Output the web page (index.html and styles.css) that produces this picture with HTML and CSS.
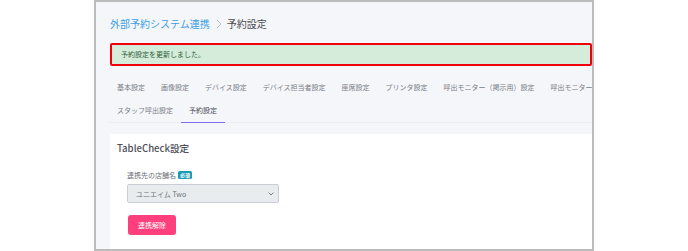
FILE: index.html
```html
<!DOCTYPE html>
<html lang="ja">
<head>
<meta charset="utf-8">
<link rel="stylesheet" href="styles.css">
</head>
<body>
<div class="frame">
  <div class="breadcrumb">
    <a class="crumb-link">外部予約システム連携</a>
    <svg class="crumb-sep" width="6" height="10" viewBox="0 0 6 10"><path d="M1 1 L5 5 L1 9" fill="none" stroke="#b8bcc4" stroke-width="1"/></svg>
    <span class="crumb-current">予約設定</span>
  </div>
  <div class="alert">予約設定を更新しました。</div>
  <nav class="tabs">
    <span class="tab">基本設定</span>
    <span class="tab">画像設定</span>
    <span class="tab">デバイス設定</span>
    <span class="tab">デバイス担当者設定</span>
    <span class="tab">座席設定</span>
    <span class="tab">プリンタ設定</span>
    <span class="tab">呼出モニター（掲示用）設定</span>
    <span class="tab">呼出モニター（受付用）設定</span>
    <span class="tab">スタッフ呼出設定</span>
    <span class="tab active">予約設定</span>
  </nav>
  <section class="card">
    <h2 class="card-title">TableCheck設定</h2>
    <div class="form-group">
      <div class="label">連携先の店舗名<span class="badge">必須</span></div>
      <div class="select">
        <span>ユニエイム Two</span>
        <svg width="6" height="4" viewBox="0 0 6 4"><path d="M0.6 0.6 L3 3 L5.4 0.6" fill="none" stroke="#6c757d" stroke-width="0.9"/></svg>
      </div>
      <button class="btn">連携解除</button>
    </div>
  </section>
</div>
</body>
</html>
```
FILE: styles.css
```css
* { box-sizing: border-box; }
body {
  margin: 0;
  background: #ffffff;
  font-family: "Noto Sans CJK JP", "Noto Sans", sans-serif;
}
.frame {
  margin-left: 94px;
  width: 500px;
  height: 251px;
  border: 2px solid #bcbcbc;
  background: #f5f6fa;
  overflow: hidden;
  padding-left: 14px;
  display: flex;
  flex-direction: column;
}
.breadcrumb {
  margin-top: 15px;
  height: 14px;
  display: flex;
  align-items: center;
  font-size: 10px;
  line-height: 14px;
}
.crumb-link { color: #3d9ee3; }
.crumb-sep { margin: 0 5px 0 6px; }
.crumb-current { color: #4a4a50; }
.alert {
  margin-top: 12px;
  height: 23px;
  border: 2px solid #f0000a;
  border-radius: 2px;
  background: #d5ecdb;
  color: #2f5e3a;
  font-size: 7px;
  line-height: 19px;
  padding-left: 9px;
}
.tabs {
  margin-top: 10px;
  width: 560px;
  display: flex;
  flex-wrap: wrap;
  margin-left: -1px;
  border-bottom: 1px solid #eceef3;
}
.tab {
  height: 23px;
  line-height: 23px;
  padding: 0 8px;
  font-size: 7px;
  color: #7a7d85;
  white-space: nowrap;
}
.tab.active {
  color: #4a4a55;
  border-bottom: 1.5px solid #7b6ef0;
  margin-bottom: -1px;
  line-height: 22px;
  height: 24px;
}
.card {
  margin-top: 11px;
  flex: 1;
  background: #ffffff;
  padding: 7px 0 0 7px;
}
.card-title {
  margin: 0;
  font-size: 9.6px;
  font-weight: 500;
  line-height: 14px;
  color: #4f4f5a;
}
.form-group {
  padding-left: 10px;
  margin-top: 15px;
  display: flex;
  flex-direction: column;
  align-items: flex-start;
}
.label {
  font-size: 7px;
  line-height: 10px;
  color: #6d7079;
  display: flex;
  align-items: center;
}
.badge {
  margin-left: 2px;
  background: #1b9bb3;
  color: #ffffff;
  font-size: 5px;
  line-height: 8px;
  padding: 0 2px;
  border-radius: 1.5px;
  font-weight: 700;
}
.select {
  margin-top: 4px;
  width: 152px;
  height: 19px;
  background: #e9ecef;
  border: 1px solid #c9ced6;
  border-radius: 2px;
  display: flex;
  align-items: center;
  justify-content: space-between;
  padding: 0 4px 0 8px;
  font-size: 7px;
  color: #6c717a;
}
.btn {
  margin-top: 12px;
  margin-left: 1px;
  height: 20px;
  padding: 0 10px;
  border: none;
  border-radius: 3px;
  background: #fd3f7d;
  color: #ffffff;
  font-family: inherit;
  font-size: 7px;
  line-height: 20px;
}
```
